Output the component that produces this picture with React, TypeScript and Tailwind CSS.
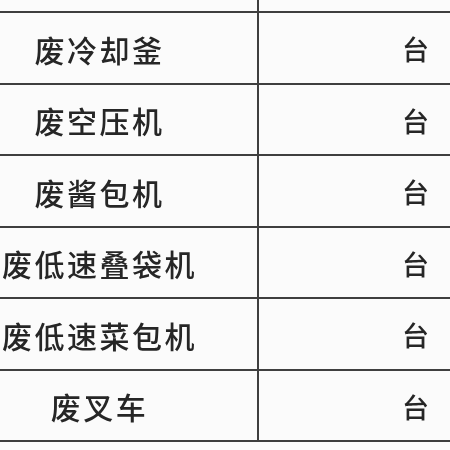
const rows = ["废冷却釜", "废空压机", "废酱包机", "废低速叠袋机", "废低速菜包机", "废叉车"];

export default function App() {
  return (
    <div
      className="w-[450px] h-[450px] overflow-hidden bg-[#fbfbfb] text-[#262626]"
      style={{ fontFamily: '"Noto Sans CJK SC", "Noto Sans", sans-serif' }}
    >
      {/* stub of the row above */}
      <div className="flex h-[11px]">
        <div className="w-[259px] border-r-2 border-[#3f3f3f]" />
      </div>
      <div className="border-t-2 border-[#3f3f3f]">
        {rows.map((name) => (
          <div key={name} className="flex h-[71.5px] border-b-2 border-[#3f3f3f]">
            <div className="w-[259px] shrink-0 border-r-2 border-[#3f3f3f] flex items-center justify-center pr-[58px] pt-[2px]">
              <span className="text-[30px] leading-none tracking-[2.5px] font-medium whitespace-nowrap blur-[0.3px]">
                {name}
              </span>
            </div>
            <div className="flex-1 flex items-center justify-end pr-[21px] pt-[2px]">
              <span className="text-[27px] leading-none font-medium blur-[0.3px]">台</span>
            </div>
          </div>
        ))}
      </div>
    </div>
  );
}
